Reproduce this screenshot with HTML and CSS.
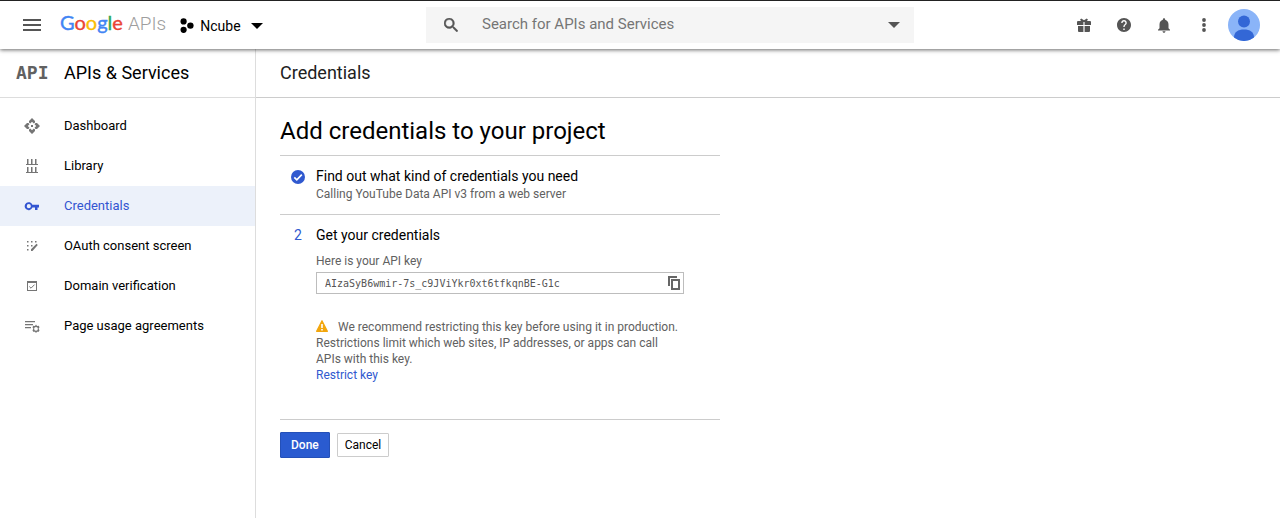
FILE: index.html
```
<!DOCTYPE html>
<html lang="en">
<head>
<meta charset="utf-8">
<meta name="viewport" content="width=device-width, initial-scale=1">
<title>Credentials - APIs &amp; Services</title>
<link rel="stylesheet" href="styles.css">
</head>
<body>
<header class="topbar">
  <div class="topbar-left">
    <button class="icon-btn menu-btn" aria-label="Main menu"><svg width="18" height="12" viewBox="0 0 18 12"><path d="M0 0h18v2H0zM0 5h18v2H0zM0 10h18v2H0z"/></svg></button>
    <a class="logo" href="#"><span class="g-blue">G</span><span class="g-red">o</span><span class="g-yellow">o</span><span class="g-blue">g</span><span class="g-green">l</span><span class="g-red">e</span> <span class="logo-sub">APIs</span></a>
    <button class="project-btn"><svg width="14" height="16" viewBox="0 0 14 16"><circle cx="3.6" cy="3.4" r="3.1"/><circle cx="3.6" cy="11.8" r="3.1"/><circle cx="10.4" cy="7.6" r="3.2"/></svg><span>Ncube</span><svg class="caret" width="12" height="6" viewBox="0 0 12 6"><path d="M0 0h12L6 6z"/></svg></button>
  </div>
  <form class="search" role="search">
    <svg width="14" height="14" viewBox="3 3 17.5 17.5"><path stroke="currentColor" stroke-width=".6" d="M15.5 14h-.79l-.28-.27A6.471 6.471 0 0 0 16 9.500 6.500 6.500 0 1 0 9.500 16c1.610 0 3.090-.59 4.230-1.570l.27.28v.79l5 4.990L20.490 19l-4.990-5zm-6 0C7.010 14 5 11.990 5 9.500S7.010 5 9.500 5 14 7.010 14 9.500 11.990 14 9.500 14z"/></svg>
    <input type="search" class="search-input" placeholder="Search for APIs and Services" aria-label="Search for APIs and Services">
    <button type="button" class="search-more" aria-label="Search options"><svg width="12" height="6" viewBox="0 0 12 6"><path d="M0 0h12L6 6z"/></svg></button>
  </form>
  <div class="topbar-right">
    <button class="icon-btn" aria-label="Free trial"><svg width="14" height="14" viewBox="0 0 14 14"><path d="M1 3h3.200L3 1.700 4.200.6 7 2.200 9.800.6 11 1.700 9.800 3H13a1 1 0 0 1 1 1v3H7.600V4H6.400v3H0V4a1 1 0 0 1 1-1zM1 8h5.400v6H2a1 1 0 0 1-1-1zM7.600 8H13v5a1 1 0 0 1-1 1H7.600z"/></svg></button>
    <button class="icon-btn" aria-label="Help"><svg width="14" height="14" viewBox="2 2 20 20"><path d="M12 2C6.480 2 2 6.480 2 12s4.480 10 10 10 10-4.480 10-10S17.520 2 12 2zm1 17h-2v-2h2v2zm2.070-7.750l-.9.920C13.450 12.900 13 13.500 13 15h-2v-.5c0-1.100.45-2.100 1.170-2.830l1.240-1.260c.37-.36.59-.86.59-1.410 0-1.100-.9-2-2-2s-2 .9-2 2H8c0-2.210 1.790-4 4-4s4 1.790 4 4c0 .88-.36 1.680-.93 2.250z"/></svg></button>
    <button class="icon-btn" aria-label="Notifications"><svg width="12" height="15" viewBox="4 2.500 16 19.500"><path d="M12 22c1.100 0 2-.9 2-2h-4c0 1.100.89 2 2 2zm6-6v-5c0-3.070-1.640-5.640-4.500-6.320V4c0-.83-.67-1.500-1.500-1.500s-1.500.67-1.500 1.500v.68C7.630 5.360 6 7.920 6 11v5l-2 2v1h16v-1l-2-2z"/></svg></button>
    <button class="icon-btn" aria-label="More"><svg width="4" height="14" viewBox="0 0 4 14"><circle cx="2" cy="2" r="1.900"/><circle cx="2" cy="7" r="1.900"/><circle cx="2" cy="12" r="1.900"/></svg></button>
    <button class="avatar" aria-label="Account"><svg width="32" height="32" viewBox="0 0 32 32"><circle cx="16" cy="16" r="16" fill="#8ab4f8"/><circle cx="16" cy="12.500" r="6" fill="#3367d6"/><path d="M6 28.500C6 23 10 20.500 16 20.500s10 2.500 10 8A16 16 0 0 1 6 28.500z" fill="#3367d6"/></svg></button>
  </div>
</header>
<div class="layout">
  <aside class="sidebar">
    <div class="bar section-title"><span class="api-mark" aria-hidden="true">API</span><h2 class="bar-heading">APIs &amp; Services</h2></div>
    <nav class="nav">
      <a class="nav-item" href="#"><svg width="16" height="16" viewBox="0 0 16 16"><path d="M8 0l3 3v1.500L9.800 5.500 8 3.800 6.200 5.500 5 4.500V3zM8 16l-3-3v-1.500l1.200-1L8 12.200l1.800-1.700 1.200 1V13zM0 8l3-3h1.500l1 1.200L3.800 8l1.700 1.800-1 1.200H3zM16 8l-3 3h-1.500l-1-1.200L12.200 8l-1.700-1.800 1-1.200H13zM7 7h2v2H7z"/></svg>Dashboard</a>
      <a class="nav-item" href="#"><svg width="16" height="16" viewBox="0 0 16 16"><path d="M3 1h1.500v5H3zM7 1h1.500v5H7zM11 1h1.500v5H11zM2 6h12v1H2zM3 9h1.500v5H3zM7 9h1.500v5H7zM11 9h1.500v5H11zM2 14h12v1H2z"/></svg>Library</a>
      <a class="nav-item active" href="#" aria-current="page"><svg width="16" height="16" viewBox="0 0 16 16"><path d="M8.400 6.800A4 4 0 1 0 8.400 9.500H11V12h2.500V9.500H15V6.800zM4.800 10.200a2 2 0 1 1 0-4.100 2 2 0 0 1 0 4.100z"/></svg>Credentials</a>
      <a class="nav-item" href="#"><svg width="16" height="16" viewBox="0 0 16 16"><path d="M3 3h1.500v1.500H3zM7 3h1.500v1.500H7zM11 3h1.500v1.500H11zM3 7h1.500v1.500H3zM7 7h1.500v1.500H7zM3 11h1.500v1.500H3zM7 13v-1.700l5.500-5.500 1.300 1.300L8.500 13z"/></svg>OAuth consent screen</a>
      <a class="nav-item" href="#"><svg width="16" height="16" viewBox="0 0 16 16"><path fill-rule="evenodd" d="M3 3h10v10H3zM4 5v7h8V5z"/><path d="M5.300 8.500l1.700 1.700 3.600-3.600" fill="none" stroke="currentColor"/></svg>Domain verification</a>
      <a class="nav-item" href="#"><svg width="16" height="16" viewBox="0 0 16 16"><path d="M1 3h10v1.300H1zM1 6h8v1.300H1zM1 9h6v1.300H1z"/><path d="M12 6.500l1 1.400 1.800-.1.700 1.500L14.600 10.800l.9 1.500-.7 1.500-1.800-.1-1 1.400-1-1.400-1.800.1-.7-1.500.9-1.500-.9-1.500.7-1.500 1.800.1zM12 8.900a1.900 1.900 0 1 0 0 3.800A1.900 1.900 0 0 0 12 8.900z" fill-rule="evenodd"/></svg>Page usage agreements</a>
    </nav>
  </aside>
  <main class="main">
    <div class="bar page-title"><h2 class="bar-heading">Credentials</h2></div>
    <div class="content">
      <h1 class="heading">Add credentials to your project</h1>
      <section class="step">
        <div class="step-mark"><svg width="14" height="14" viewBox="0 0 14 14"><circle cx="7" cy="7" r="7"/><path d="M3.300 7.300l2.500 2.500 5-5.100" fill="none" stroke="#fff" stroke-width="1.700"/></svg></div>
        <div class="step-body">
          <h3 class="step-title">Find out what kind of credentials you need</h3>
          <p class="step-note">Calling YouTube Data API v3 from a web server</p>
        </div>
      </section>
      <section class="step step-current">
        <div class="step-mark">2</div>
        <div class="step-body">
          <h3 class="step-title">Get your credentials</h3>
          <label class="key-label" for="api-key">Here is your API key</label>
          <div class="key-box">
            <input id="api-key" class="key-input" type="text" readonly value="AIzaSyB6wmir-7s_c9JViYkr0xt6tfkqnBE-G1c">
            <button class="copy-btn" aria-label="Copy key"><svg width="12" height="14" viewBox="0 0 12 14"><path d="M0 0h9v2H2v8H0z"/><path d="M4 4h7v9H4z" fill="none" stroke="currentColor" stroke-width="2"/></svg></button>
          </div>
          <p class="warning"><svg class="warn-icon" width="12" height="12" viewBox="0 0 12 12"><path d="M6 .7l5.400 10.600H.6z" fill="#f2a60d" stroke="#f2a60d" stroke-width="1.200" stroke-linejoin="round"/><path d="M5.200 4h1.600v4H5.200zM5.200 9h1.600v1.600H5.200z" fill="#fff"/></svg>We recommend restricting this key before using it in production. Restrictions limit which web sites, IP addresses, or apps can call APIs with this key.</p>
          <a class="restrict" href="#">Restrict key</a>
        </div>
      </section>
      <div class="actions"><button class="btn primary">Done</button><button class="btn">Cancel</button></div>
    </div>
  </main>
</div>
</body>
</html>
```
FILE: styles.css
```
* { box-sizing: border-box; }
body {
  margin: 0;
  min-height: 100vh;
  display: flex;
  flex-direction: column;
  background: #fff;
  color: #000;
  font: 13px/16px Roboto, "Liberation Sans", sans-serif;
}
h1, h2, h3, p { margin: 0; font-weight: 400; }
a { text-decoration: none; }
svg { display: block; flex: none; fill: currentColor; }
button { border: 0; padding: 0; background: none; color: inherit; font: inherit; cursor: pointer; }
input { border: 0; outline: 0; background: none; font: inherit; min-width: 0; }

.topbar {
  position: relative;
  z-index: 1;
  display: flex;
  align-items: center;
  height: 49px;
  border-top: 1px solid #222;
  background: #fff;
  box-shadow: 0 1px 4px rgba(0, 0, 0, .6);
}
.topbar-left { display: flex; align-items: center; flex: 0 0 426px; color: #555; }
.icon-btn { display: flex; align-items: center; justify-content: center; width: 40px; height: 40px; color: #555; }
.menu-btn { margin-left: 12px; }
.logo { margin-left: 8px; padding-bottom: 4px; font: 20px/24px Lato, sans-serif; white-space: nowrap; -webkit-text-stroke: .4px; }
.g-blue { color: #4285f4; }
.g-red { color: #ea4335; }
.g-yellow { color: #fbbc05; }
.g-green { color: #34a853; }
.logo-sub { color: #9e9e9e; font-family: Roboto, sans-serif; font-size: 19px; font-weight: 300; -webkit-text-stroke: 0; }
.project-btn { display: flex; align-items: center; gap: 6px; margin-left: 14px; padding-top: 2px; color: #000; font-size: 14px; }
.caret { margin-left: 4px; }
.search { display: flex; align-items: center; flex: 0 1 488px; height: 36px; padding: 0 14px 0 18px; background: #f5f5f5; color: #555; }
.search-input { flex: 1; margin-left: 24px; padding: 0 0 2px; font-size: 15px; line-height: 20px; }
.search-input::placeholder { color: #757575; opacity: 1; }
.topbar-right { display: flex; align-items: center; margin-left: auto; padding-right: 20px; }
.avatar { margin-left: 4px; }

.layout { display: flex; flex: 1; }
.sidebar { flex: 0 0 256px; border-right: 1px solid #ddd; }
.bar { display: flex; align-items: center; height: 49px; border-bottom: 1px solid #ddd; }
.bar-heading { font-size: 18px; line-height: 24px; }
.section-title { padding-left: 16px; }
.api-mark { width: 48px; color: #616161; font: bold 18px/24px "DejaVu Sans Mono", monospace; }
.nav { padding-top: 8px; }
.nav-item { display: flex; align-items: center; gap: 24px; height: 40px; padding-left: 24px; color: #000; }
.nav-item svg { color: #757575; }
.nav-item.active, .nav-item.active svg { color: #3355d1; }
.nav-item.active { background: #ecf1fa; }

.main { flex: 1; min-width: 0; }
.page-title { padding-left: 24px; border-color: #ccc; }
.page-title .bar-heading { color: #212121; }
.content { max-width: 464px; padding: 17px 0 24px 24px; }
.heading { padding-bottom: 8px; font-size: 24px; line-height: 32px; }
.step { display: flex; padding: 12px 0 12px 10px; border-top: 1px solid #ccc; }
.step-mark { flex: 0 0 26px; padding-left: 1px; color: #3059cf; font-size: 14px; line-height: 16px; }
.step-mark svg { margin-top: 2px; }
.step-current .step-mark { padding-left: 4px; }
.step-body { flex: 1; min-width: 0; padding-right: 36px; }
.step-title { padding-bottom: 2px; font-size: 14px; line-height: 16px; }
.step-note, .key-label, .warning, .restrict { color: #616161; font-size: 12px; line-height: 16px; }
.key-label { display: block; margin-top: 8px; }
.key-box { display: flex; align-items: center; height: 22px; margin: 3px 0 25px; padding: 0 3px 0 8px; border: 1px solid #bdbdbd; }
.key-input { flex: 1; padding: 2px 0 0; color: #555; font: 10px/16px "DejaVu Sans Mono", "Liberation Mono", monospace; }
.copy-btn { color: #666; }
.warn-icon { display: inline-block; margin-right: 10px; vertical-align: -1px; }
.restrict { display: inline-block; color: #3059cf; }
.step-current { padding-bottom: 36px; border-bottom: 1px solid #ccc; }
.actions { display: flex; align-items: center; gap: 7px; padding-top: 12px; }
.btn { height: 24px; padding: 0 7px; border: 1px solid #ccc; border-radius: 1px; background: #fff; font-size: 12px; line-height: 16px; }
.btn.primary { height: 26px; padding: 0 10px; border-color: #2450b8; background: #2a5bd0; color: #fff; font-weight: 500; }
```
